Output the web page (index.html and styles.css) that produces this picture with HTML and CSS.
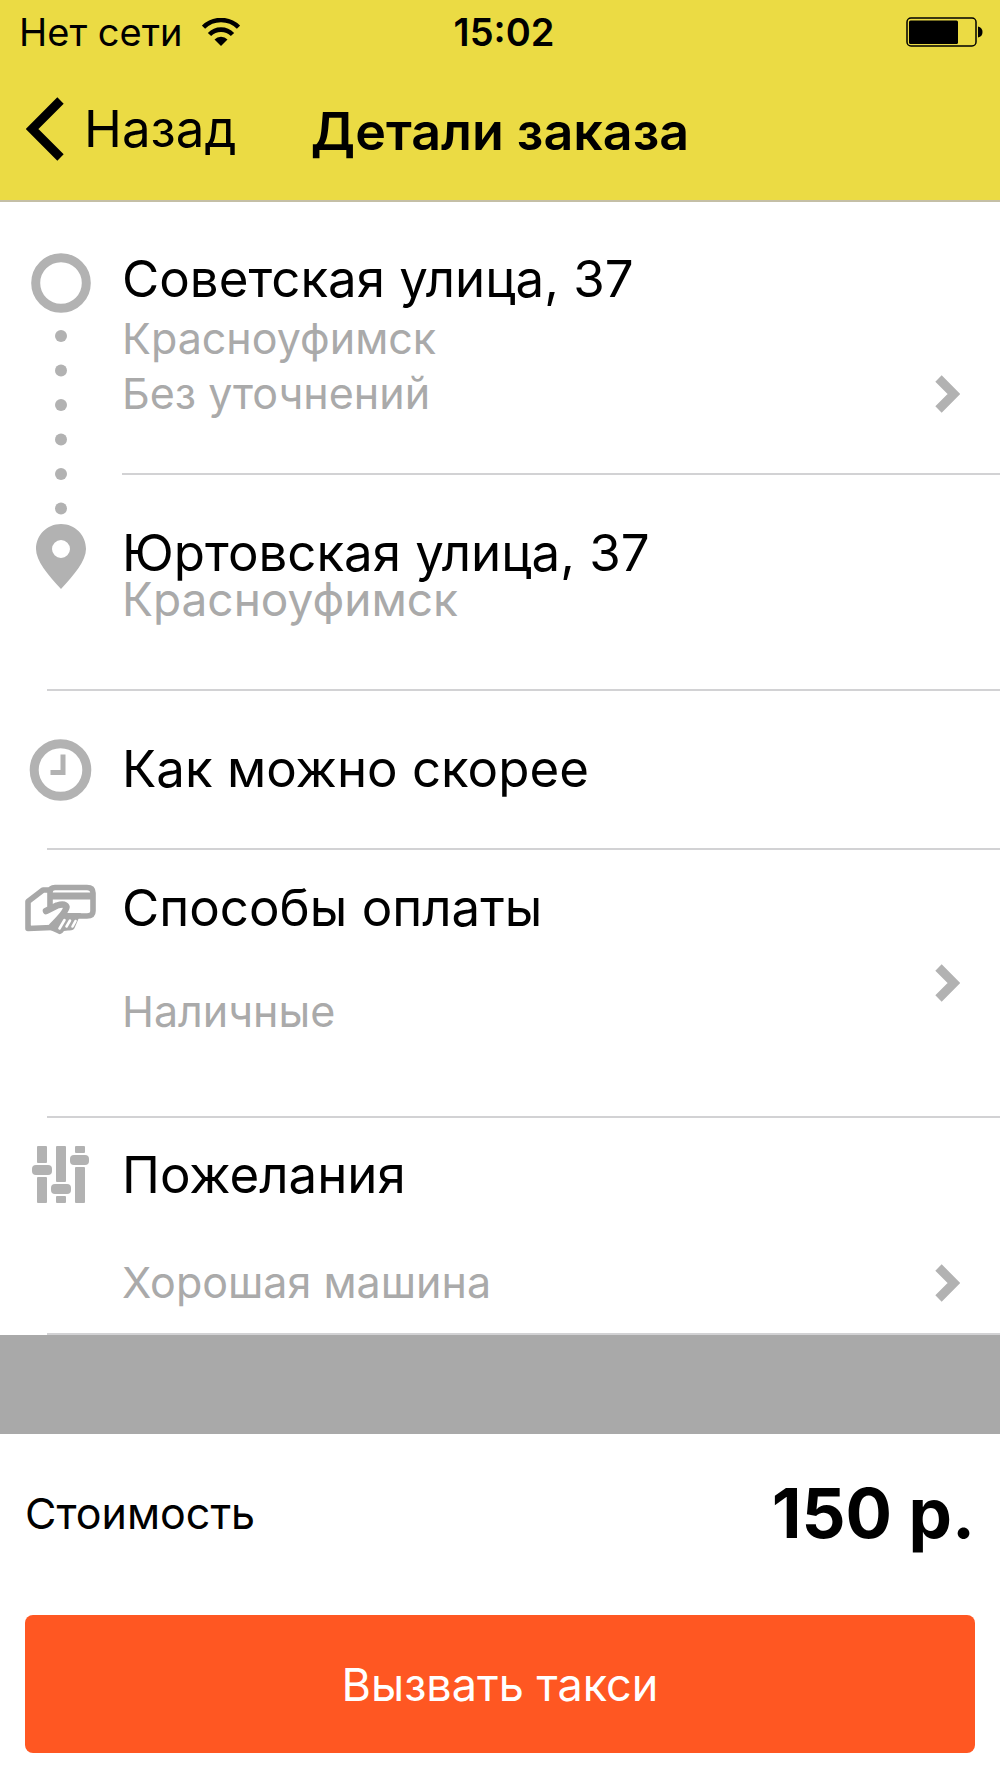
FILE: index.html
```html
<!DOCTYPE html>
<html lang="ru">
<head>
<meta charset="utf-8">
<meta name="viewport" content="width=device-width, initial-scale=1">
<title>Детали заказа</title>
<link rel="stylesheet" href="styles.css">
</head>
<body>
<header class="top">
  <div class="status">
    <div class="carrier">
      <span>Нет сети</span>
      <svg class="wifi" width="38" height="28" viewBox="0 0 38 28" aria-hidden="true">
        <path d="M1.500 9.200A25 25 0 0 1 36.500 9.200" fill="none" stroke="#000" stroke-width="4.600"/>
        <path d="M7.500 16.500A16 16 0 0 1 30.500 16.500" fill="none" stroke="#000" stroke-width="4.600"/>
        <path d="M19 28L12.500 21.500A9 9 0 0 1 25.500 21.500Z"/>
      </svg>
    </div>
    <time class="clock">15:02</time>
    <svg class="battery" width="77" height="30" viewBox="0 0 77 30" aria-hidden="true">
      <rect x="1" y="1" width="69" height="28" rx="4" fill="none" stroke="#000" stroke-width="1.500"/>
      <rect x="3" y="3.500" width="49" height="23.500" rx="1.500"/>
      <path d="M72 9.500q4.500 1 4.500 5.500t-4.500 5.500z"/>
    </svg>
  </div>
  <nav class="nav">
    <a class="back" href="#">
      <svg width="38" height="64" viewBox="0 0 38 64" aria-hidden="true"><path d="M34.500 3.500L6 32L34.500 60.500" fill="none" stroke="#000" stroke-width="9"/></svg>
      <span>Назад</span>
    </a>
    <h1 class="title">Детали заказа</h1>
  </nav>
</header>

<main>
  <section class="route">
    <svg class="route-line" width="60" height="338" viewBox="0 0 60 338" aria-hidden="true">
      <circle cx="30" cy="30" r="25.300" fill="none" stroke="#b2b2b2" stroke-width="9"/>
      <g fill="#b2b2b2">
        <circle cx="30" cy="83" r="6"/><circle cx="30" cy="117.500" r="6"/><circle cx="30" cy="152" r="6"/>
        <circle cx="30" cy="186.500" r="6"/><circle cx="30" cy="221" r="6"/><circle cx="30" cy="255.500" r="6"/>
        <path fill-rule="evenodd" d="M30 271C16 271 5 282 5 296C5 308 17 322 30 336C43 322 55 308 55 296C55 282 44 271 30 271ZM30 287a9 9 0 1 1 0 18a9 9 0 1 1 0-18Z"/>
      </g>
    </svg>
    <div class="stops">
      <a class="stop stop-from" href="#">
        <span class="name">Советская улица, 37</span>
        <span class="note">Красноуфимск</span>
        <span class="note">Без уточнений</span>
        <svg class="chevron" width="26" height="40" viewBox="0 0 26 40" aria-hidden="true"><path d="M4.500 4.500L20 20L4.500 35.500" fill="none" stroke="#b2b2b2" stroke-width="9"/></svg>
      </a>
      <div class="stop stop-to">
        <span class="name">Юртовская улица, 37</span>
        <span class="note note-tight">Красноуфимск</span>
      </div>
    </div>
  </section>

  <div class="row row-time">
    <svg class="icon" width="64" height="64" viewBox="0 0 64 64" aria-hidden="true">
      <circle cx="31.500" cy="33" r="26.300" fill="none" stroke="#b2b2b2" stroke-width="9"/>
      <path d="M34 17.500V35.500H21.500" fill="none" stroke="#b2b2b2" stroke-width="5"/>
    </svg>
    <span class="name">Как можно скорее</span>
  </div>

  <a class="row row-pay" href="#">
    <svg class="icon" width="74" height="56" viewBox="-1 -4 74 56" aria-hidden="true">
      <g fill="none" stroke="#a8a8a8" stroke-width="5.600" stroke-linejoin="round" stroke-linecap="round">
        <path d="M24 6H18L3 17.500V44.500L27 43.500"/>
        <path d="M25 22V8Q25 3.500 30 3.500H62Q68 3.500 68 9V27Q68 32 62 32H43"/>
        <path d="M21 27L32 21.500Q40 19 41.500 23Q41 28 27 42" stroke-width="6.500"/>
      </g>
      <path d="M26 8.500H68V15.500H26Z" fill="#a8a8a8"/>
      <path d="M23 45L40 29H56L50 43Q49 47 43 46.500L39 47Q36 52 32 49Z" fill="#a8a8a8"/>
      <g fill="none" stroke="#fff" stroke-width="2.600" stroke-linecap="round">
        <path d="M34.500 44.500L39.500 36M41.500 42.500L45 36.500M47.500 42.500L50.500 37"/>
      </g>
    </svg>
    <span class="name">Способы оплаты</span>
    <span class="note">Наличные</span>
    <svg class="chevron" width="26" height="40" viewBox="0 0 26 40" aria-hidden="true"><path d="M4.500 4.500L20 20L4.500 35.500" fill="none" stroke="#b2b2b2" stroke-width="9"/></svg>
  </a>

  <a class="row row-wishes" href="#">
    <svg class="icon" width="58" height="58" viewBox="0 0 58 58" aria-hidden="true">
      <g fill="#b2b2b2">
        <rect x="5" y="0" width="10" height="17" rx="1"/><rect x="0" y="19" width="20" height="10" rx="4"/><rect x="5" y="31" width="10" height="26" rx="1"/>
        <rect x="24" y="0" width="10" height="36" rx="1"/><rect x="19" y="38" width="20" height="10" rx="4"/><rect x="24" y="50" width="10" height="7" rx="1"/>
        <rect x="43" y="0" width="10" height="7" rx="1"/><rect x="38" y="9" width="19" height="10" rx="4"/><rect x="43" y="21" width="10" height="36" rx="1"/>
      </g>
    </svg>
    <span class="name">Пожелания</span>
    <span class="note">Хорошая машина</span>
    <svg class="chevron" width="26" height="40" viewBox="0 0 26 40" aria-hidden="true"><path d="M4.500 4.500L20 20L4.500 35.500" fill="none" stroke="#b2b2b2" stroke-width="9"/></svg>
  </a>
</main>

<div class="spacer"></div>

<footer class="summary">
  <div class="cost">
    <span class="cost-label">Стоимость</span>
    <strong class="price">150 р.</strong>
  </div>
  <button class="order" type="button">Вызвать такси</button>
</footer>
</body>
</html>
```
FILE: styles.css
```css
* {
  box-sizing: border-box;
}

body {
  margin: 0;
  background: #fff;
  color: #000;
  font-family: Inter, "Liberation Sans", sans-serif;
}

a {
  color: inherit;
  text-decoration: none;
}

svg {
  display: block;
  flex: none;
}

.top {
  background: #ebdb44;
  border-bottom: 2px solid #c4bfa6;
}

.status,
.nav {
  display: grid;
  grid-template-columns: 1fr auto 1fr;
  align-items: center;
}

.status {
  height: 64px;
  padding: 0 17px 0 19px;
  font-size: 38px;
  line-height: 64px;
}

.carrier {
  display: flex;
  align-items: center;
  gap: 20px;
}

.clock {
  padding-left: 6px;
  font-weight: 600;
}

.battery {
  justify-self: end;
}

.nav {
  height: 136px;
  padding: 0 26px;
  line-height: 64px;
}

.back {
  display: flex;
  align-items: center;
  gap: 20px;
  padding-bottom: 6px;
  font-size: 51px;
}

.title {
  margin: 0;
  font-size: 52px;
  font-weight: 600;
}

.name {
  font-size: 51px;
  line-height: 64px;
}

.note {
  color: #aaa;
  font-size: 43px;
  line-height: 55px;
}

.route {
  display: grid;
  grid-template-columns: 122px 1fr;
  position: relative;
}

.route-line {
  justify-self: center;
  margin-top: 51px;
}

.stop {
  display: grid;
  grid-template-columns: 1fr auto;
  padding-right: 40px;
}

.stop .name,
.stop .note {
  grid-column: 1;
}

.stop .chevron {
  grid-area: 3 / 2;
  align-self: center;
}

.stop-from {
  padding-top: 45px;
  padding-bottom: 52px;
  border-bottom: 2px solid #d2d2d4;
}

.stop-to {
  padding-top: 46px;
  padding-bottom: 78px;
}

.stop .note-tight {
  font-size: 46px;
  line-height: 28px;
}

.row {
  display: grid;
  grid-template-columns: 122px 1fr auto;
  align-items: center;
  padding-right: 40px;
  position: relative;
}

.route::after,
.row::after {
  content: "";
  position: absolute;
  left: 47px;
  right: 0;
  bottom: 0;
  height: 2px;
  background: #d2d2d4;
}

.icon {
  justify-self: center;
}

.row .note {
  grid-column: 2;
}

.row .chevron {
  grid-column: 3;
}

.row-time {
  padding-top: 46px;
  padding-bottom: 49px;
}

.row-pay {
  row-gap: 44px;
  padding-top: 26px;
  padding-bottom: 79px;
}

.row-pay .chevron {
  grid-row: 1 / 3;
  margin-top: 50px;
}

.row-wishes {
  row-gap: 48px;
  padding-top: 25px;
  padding-bottom: 25px;
}

.row-wishes .chevron {
  grid-row: 2;
}

.spacer {
  height: 99px;
  background: #a9a9a9;
}

.summary {
  padding: 0 25px 25px;
}

.cost {
  display: flex;
  align-items: center;
  justify-content: space-between;
  height: 181px;
  padding-bottom: 24px;
}

.cost-label {
  font-size: 43px;
}

.price {
  font-size: 69px;
  font-weight: 700;
}

.order {
  display: block;
  width: 100%;
  height: 138px;
  border: 0;
  border-radius: 8px;
  background: #ff5722;
  color: #fff;
  font: 400 45px Inter, "Liberation Sans", sans-serif;
}
```
